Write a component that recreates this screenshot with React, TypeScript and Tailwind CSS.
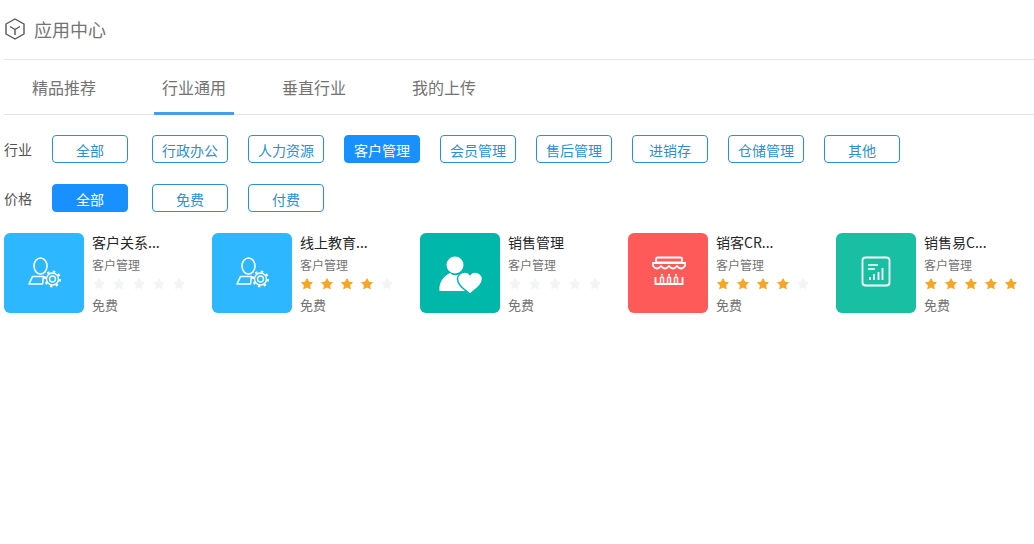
import { Star } from 'lucide-react';

const industries = ['全部', '行政办公', '人力资源', '客户管理', '会员管理', '售后管理', '进销存', '仓储管理', '其他'];
const prices = ['全部', '免费', '付费'];

function PersonGear() {
    return (
        <svg viewBox="0 0 80 80" className="w-20 h-20" fill="none" stroke="white" strokeWidth="1.6" strokeLinejoin="round">
            <ellipse cx="36.500" cy="33" rx="6.500" ry="8" />
            <path d="M25 51 L28.500 43.500 H39.500 L38.500 51 Z" />
            <circle cx="48.500" cy="46" r="6" strokeWidth="1.4" />
            <circle cx="48.500" cy="46" r="3" strokeWidth="1.4" />
            <circle cx="48.500" cy="46" r="7.500" strokeWidth="2" strokeDasharray="2.500 3.390" />
        </svg>
    );
}

function PersonHeart() {
    return (
        <svg viewBox="0 0 80 80" className="w-20 h-20" fill="white">
            <circle cx="35" cy="32" r="8.500" />
            <path d="M19.500 58 C18.500 49 24 43 30 40 C33 43 38 43 41 40 C45 42 48 45 50 50 L45 58 Z" />
            <path
                d="M50 61 C44 56 37.500 52 37.500 46 C37.500 42 41 39 45 39 C47 39 49 40 50 41.500 C51 40 53 39 55 39 C59 39 62.500 42 62.500 46 C62.500 52 56 56 50 61 Z"
                stroke="#00b8a9"
                strokeWidth="1.500"
            />
        </svg>
    );
}

function Shop() {
    return (
        <svg viewBox="0 0 80 80" className="w-20 h-20" fill="none" stroke="white" strokeWidth="1.800">
            <rect x="28" y="24.500" width="26" height="5" rx="1.500" />
            <path d="M25 30 H57 V33 Q53 38 49 33 Q45 38 41 33 Q37 38 33 33 Q29 38 25 33 Z" />
            <path d="M27.500 44 V51 H54.500 V44" />
            <path d="M32.500 50 V45 Q34 43 35.500 45 V50 M39.500 50 V45 Q41 43 42.500 45 V50 M46.500 50 V45 Q48 43 49.500 45 V50" strokeWidth="1.500" />
            <path d="M34 42.500 V41 M41 42.500 V41 M48 42.500 V41" strokeWidth="2" />
        </svg>
    );
}

function ChartCard() {
    return (
        <svg viewBox="0 0 80 80" className="w-20 h-20" fill="none" stroke="white" strokeWidth="1.800">
            <rect x="26.500" y="24.500" width="27" height="28" rx="3" />
            <path d="M32 32 H42 M32 36 H39" strokeWidth="1.500" />
            <path d="M34 47 V44 M38 47 V41 M42.500 47 V39 M46.500 47 V35" />
        </svg>
    );
}

const apps = [
    { name: '客户关系...', stars: 0, color: 'bg-[#2db7ff]', icon: <PersonGear /> },
    { name: '线上教育...', stars: 4, color: 'bg-[#2db7ff]', icon: <PersonGear /> },
    { name: '销售管理', stars: 0, color: 'bg-[#00b8a9]', icon: <PersonHeart /> },
    { name: '销客CR...', stars: 4, color: 'bg-[#ff5a5a]', icon: <Shop /> },
    { name: '销售易C...', stars: 5, color: 'bg-[#19bfa3]', icon: <ChartCard /> },
];

function FilterRow({ label, items, active }: { label: string; items: string[]; active: number }) {
    return (
        <div className="flex items-center pb-px">
            <span className="w-7 text-sm text-neutral-600">{label}</span>
            <div className="flex gap-5 ml-5">
                {items.map((item, index) => (
                    <button
                        key={item}
                        className={`w-19 h-7 pt-0.5 rounded border text-sm ${index === 0 ? 'mr-1' : ''} ${
                            index === active
                                ? 'bg-[#1890ff] border-[#1890ff] text-white'
                                : 'bg-white border-[#2b8fd3] text-[#2b8fd3]'
                        }`}
                    >
                        {item}
                    </button>
                ))}
            </div>
        </div>
    );
}

export default function App() {
    return (
        <div
            className="min-h-screen bg-white pl-1"
            style={{ fontFamily: '"Noto Sans CJK SC", sans-serif' }}
        >
            <div className="flex items-center gap-1.5 h-15 pb-0.5 border-b border-neutral-200">
                <svg viewBox="0 0 24 24" className="w-6 h-6" fill="none" stroke="#555" strokeWidth="1.4" strokeLinejoin="round">
                    <path d="M11 2 L20 7 V17 L11 22 L2 17 V7 Z" />
                    <path d="M6 9.500 L11 12.500 L16 9.500 M11 12.500 V18" />
                </svg>
                <span className="text-lg text-neutral-500">应用中心</span>
            </div>

            <nav className="flex gap-10 pl-5 border-b border-neutral-200">
                {['精品推荐', '行业通用', '垂直行业', '我的上传'].map((tab, index) => (
                    <div
                        key={tab}
                        className={`w-20 -mb-px pt-3 pb-2.5 text-center text-base leading-7.5 text-neutral-500 border-b-3 ${
                            index === 1 ? 'border-[#4a9be8]' : 'border-transparent'
                        } ${index === 0 || index === 2 ? 'mr-2.5' : ''}`}
                    >
                        {tab}
                    </div>
                ))}
            </nav>

            <div className="flex flex-col gap-5 pt-5">
                <FilterRow label="行业" items={industries} active={3} />
                <FilterRow label="价格" items={prices} active={0} />

                <div className="flex overflow-hidden">
                    {apps.map((app) => (
                        <div key={app.name} className="flex gap-2 w-52 shrink-0">
                            <div className={`w-20 h-20 rounded-md ${app.color}`}>{app.icon}</div>
                            <div className="flex flex-col">
                                <div className="text-sm leading-4.5 text-neutral-800">{app.name}</div>
                                <div className="mt-1 text-xs leading-5 text-neutral-500">客户管理</div>
                                <div className="flex gap-1.5 mt-0.5">
                                    {[1, 2, 3, 4, 5].map((n) => (
                                        <Star
                                            key={n}
                                            strokeWidth={0}
                                            className={`w-3.5 h-3.5 ${
                                                n <= app.stars ? 'fill-[#f5a623]' : 'fill-gray-100'
                                            }`}
                                        />
                                    ))}
                                </div>
                                <div className="mt-1 text-[13px] leading-5 text-neutral-500">免费</div>
                            </div>
                        </div>
                    ))}
                </div>
            </div>
        </div>
    );
}
